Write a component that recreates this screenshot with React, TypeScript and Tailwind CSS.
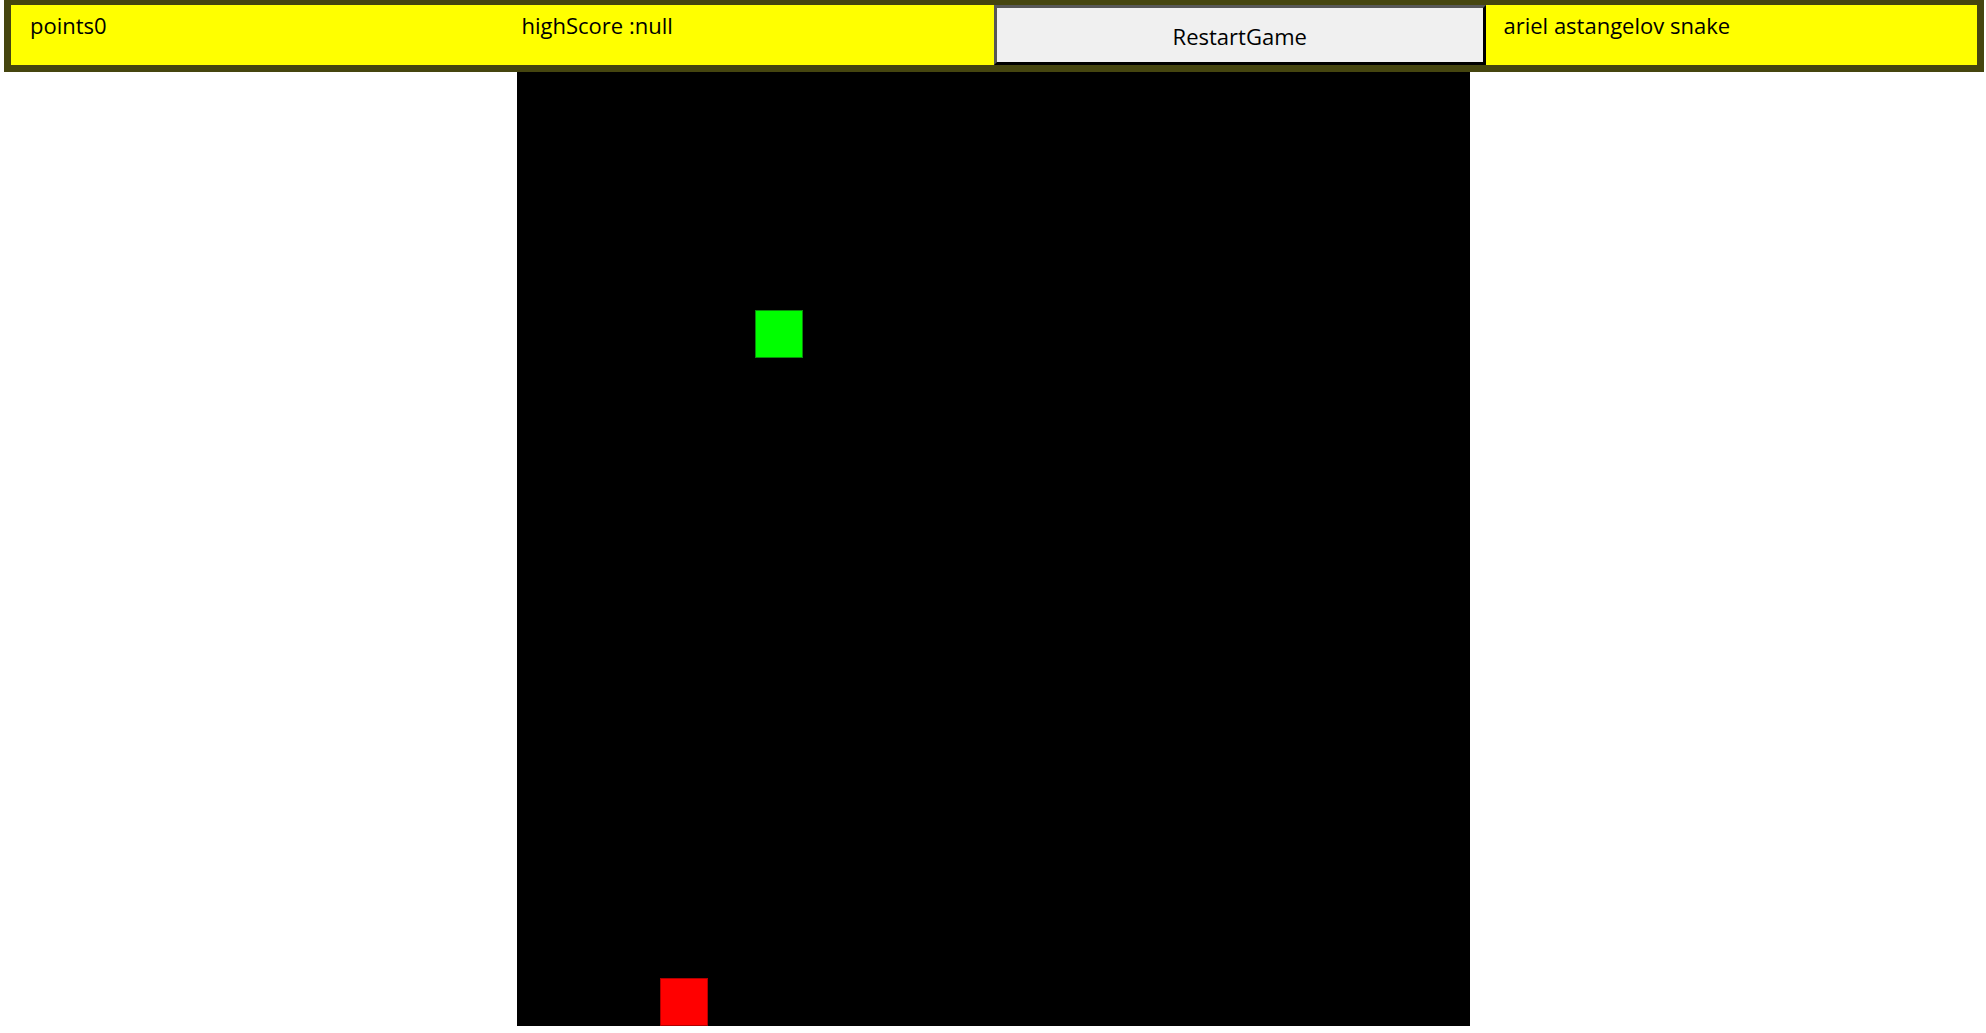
import React from "react";

export default function App() {
  return (
    <div className="min-h-screen bg-white font-['Open_Sans',sans-serif] text-[22px] text-black">
      <div className="ml-[4px] mr-[2px] border-x-[7px] border-t-[5px] border-b-[7px] border-[#45450f] bg-[#ffff00]">
        <div className="grid h-[60px] grid-cols-4">
          <div className="pl-[19px] pt-[5px] leading-[30px]">points0</div>
          <div className="pl-[19px] pt-[5px] leading-[30px]">highScore :null</div>
          <button className="flex items-center justify-center border-[3px] border-t-[#575757] border-l-[#575757] border-b-black border-r-black bg-[#f0f0f0] pt-[2px] leading-[30px] text-black">
            RestartGame
          </button>
          <div className="pl-[18px] pt-[5px] leading-[30px]">ariel astangelov snake</div>
        </div>
      </div>
      <div className="relative mx-auto h-[954px] w-[953px] bg-black">
        <div className="absolute left-[238px] top-[238px] h-[48px] w-[48px] border border-[#0b8a0b] bg-[#00ff00]" />
        <div className="absolute left-[143px] top-[906px] h-[48px] w-[48px] border border-[#b00000] bg-[#ff0000]" />
      </div>
    </div>
  );
}
